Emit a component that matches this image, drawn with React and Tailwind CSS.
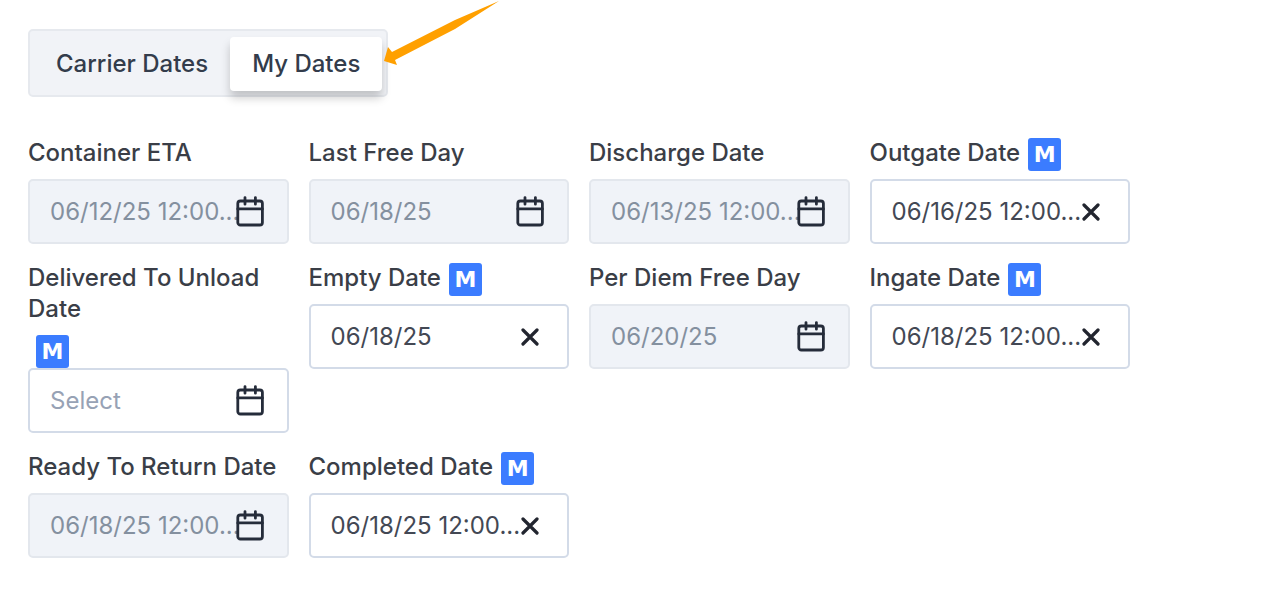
import React from 'react';

const FIELDS = [
  { id: 'container-eta', label: 'Container ETA', value: '06/12/25 12:00...', disabled: true },
  { id: 'last-free-day', label: 'Last Free Day', value: '06/18/25', disabled: true },
  { id: 'discharge-date', label: 'Discharge Date', value: '06/13/25 12:00...', disabled: true },
  { id: 'outgate-date', label: 'Outgate Date', value: '06/16/25 12:00...', manual: true },
  { id: 'delivered-date', label: 'Delivered To Unload Date', value: '', manual: true },
  { id: 'empty-date', label: 'Empty Date', value: '06/18/25', manual: true },
  { id: 'per-diem-free-day', label: 'Per Diem Free Day', value: '06/20/25', disabled: true },
  { id: 'ingate-date', label: 'Ingate Date', value: '06/18/25 12:00...', manual: true },
  { id: 'ready-to-return-date', label: 'Ready To Return Date', value: '06/18/25 12:00...', disabled: true },
  { id: 'completed-date', label: 'Completed Date', value: '06/18/25 12:00...', manual: true },
];

function CalendarIcon() {
  return (
    <svg width="28" height="31" viewBox="0 0 28 31" fill="none" stroke="#252c3a" strokeWidth="2.8" strokeLinecap="round">
      <rect x="1.8" y="5" width="24.6" height="24" rx="2.6" />
      <path d="M1.8 12.9h24.6M9 1.6v6.6M19.4 1.6v6.6" />
    </svg>
  );
}

function ClearIcon() {
  return (
    <svg width="18" height="18" viewBox="0 0 18 18" fill="none" stroke="#22252f" strokeWidth="3.2" strokeLinecap="round">
      <path d="M2 2l14 14M16 2L2 16" />
    </svg>
  );
}

function ManualBadge() {
  return (
    <span className="mt-px ml-2 flex h-[33px] w-[33px] items-center justify-center rounded-[3px] bg-[#3b7cff] font-['DejaVu_Sans',sans-serif] text-[22px] font-bold text-white">
      M
    </span>
  );
}

function DateField({ id, label, value, disabled, manual }) {
  const clearable = !disabled && value !== '';

  return (
    <div>
      <div className="flex min-h-[42px] flex-wrap items-start gap-y-[10px]">
        <label htmlFor={id} className="text-2xl/[31px] font-medium text-[#3a3e47]">
          {label}
        </label>
        {manual && <ManualBadge />}
      </div>
      <div className="relative">
        <input
          id={id}
          type="text"
          placeholder="Select"
          defaultValue={value}
          disabled={disabled}
          className="block h-[65px] w-full rounded-[5px] border-2 border-[#d3dbe8] bg-white pl-5 text-2xl text-[#434854] placeholder:text-[#97a2b5] disabled:border-[#e3e7ed] disabled:bg-[#f0f3f8] disabled:text-[#84909f]"
        />
        <button
          type="button"
          aria-label={clearable ? `Clear ${label}` : `Pick ${label}`}
          disabled={disabled}
          className="absolute inset-y-0 right-6 flex w-[30px] items-center justify-center"
        >
          {clearable ? <ClearIcon /> : <CalendarIcon />}
        </button>
      </div>
    </div>
  );
}

function DateTabs() {
  return (
    <div className="relative inline-flex rounded-[5px] border-2 border-[#e6e9ee] bg-[#f1f3f7] px-1 pt-1.5 pb-1">
      <button type="button" className="h-[54px] px-[22px] text-2xl font-medium text-[#333c4b]">
        Carrier Dates
      </button>
      <button
        type="button"
        className="h-[54px] rounded-sm bg-white px-[22px] text-2xl font-medium text-[#333c4b] shadow-[0_7px_10px_rgba(0,0,0,0.2)]"
      >
        My Dates
      </button>
      <svg className="absolute -top-[31px] left-[353px]" width="118" height="68" viewBox="0 0 118 68" fill="#ffa000">
        <path d="M116 1L72 20 9 52 5 47 1 61 14 65 12 60 72 29z" />
      </svg>
    </div>
  );
}

export default function App() {
  return (
    <main className="bg-white pt-[29px] pr-[155px] pb-10 pl-7 font-['Inter',sans-serif]">
      <DateTabs />
      <div className="mt-10 grid grid-cols-4 items-start gap-x-5 gap-y-[18px]">
        {FIELDS.map((field) => (
          <DateField key={field.id} {...field} />
        ))}
      </div>
    </main>
  );
}
